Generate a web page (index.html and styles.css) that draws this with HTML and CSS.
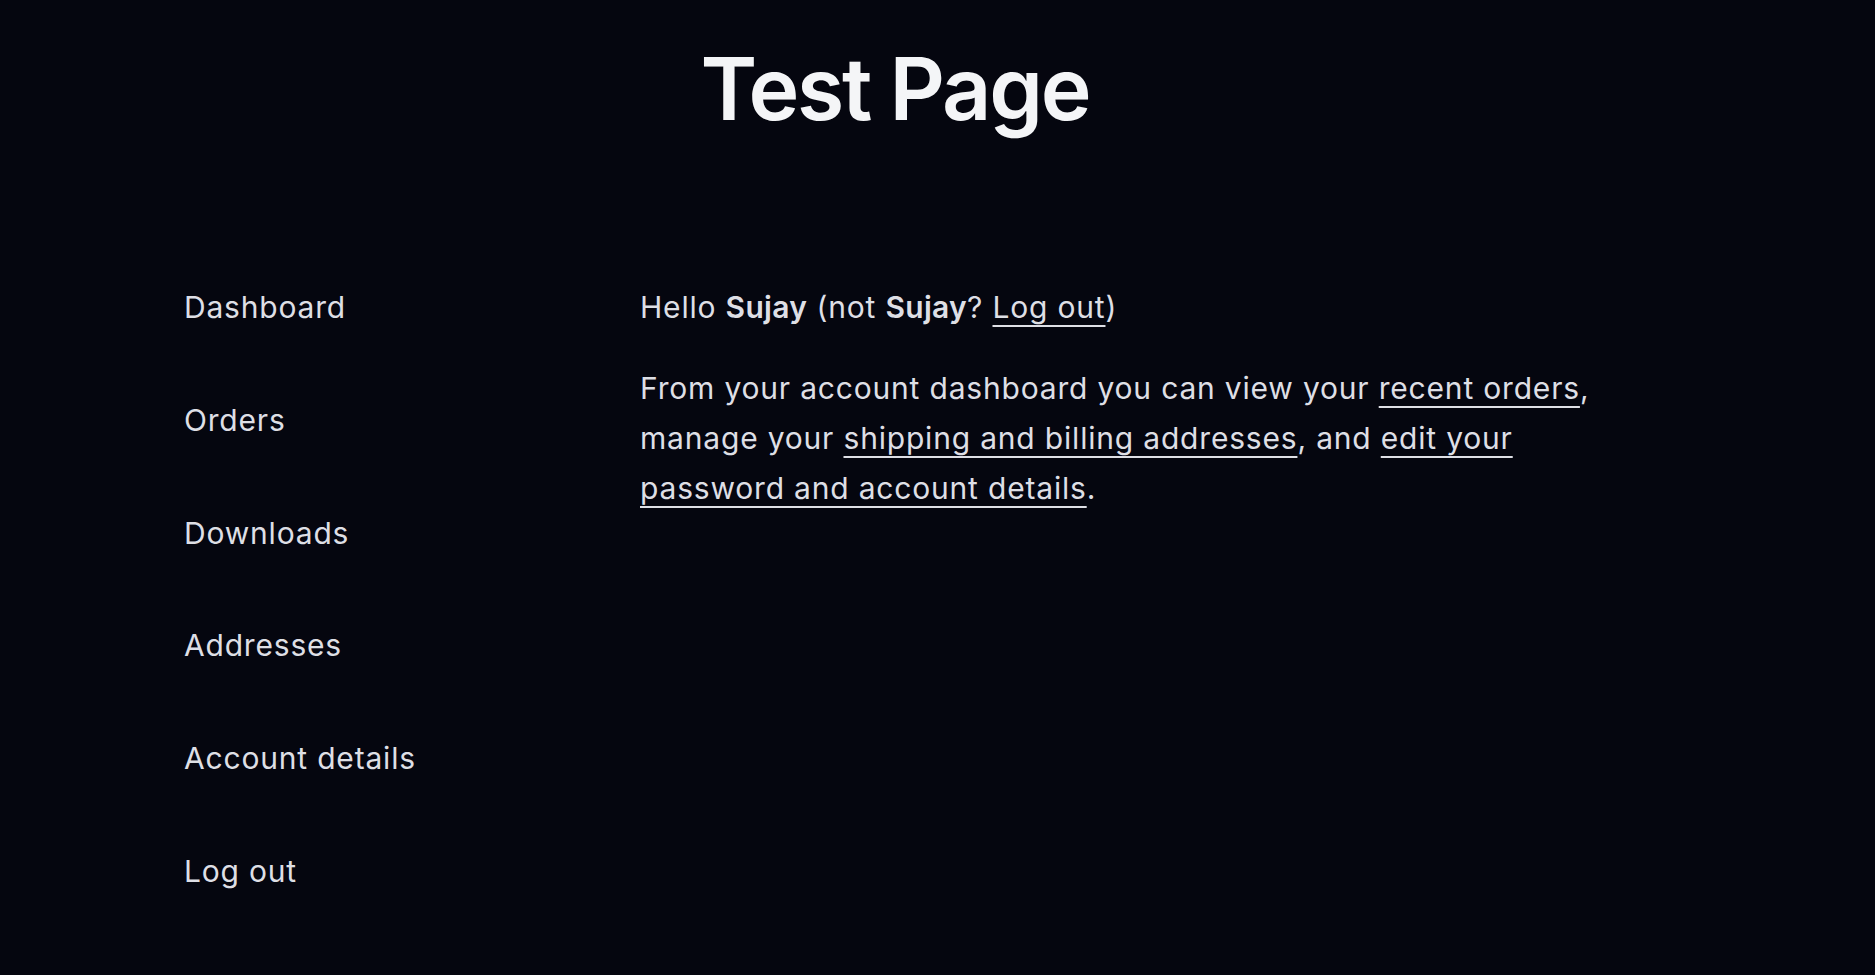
FILE: index.html
```html
<!DOCTYPE html>
<html lang="en">
<head>
<meta charset="utf-8">
<title>Test Page</title>
<link rel="stylesheet" href="styles.css">
</head>
<body>
<div class="container">
  <header class="page-header">
    <h1 class="page-title">Test Page</h1>
  </header>
  <main class="account">
    <nav class="account-nav">
      <a href="#" class="nav-link">Dashboard</a>
      <a href="#" class="nav-link">Orders</a>
      <a href="#" class="nav-link">Downloads</a>
      <a href="#" class="nav-link">Addresses</a>
      <a href="#" class="nav-link">Account details</a>
      <a href="#" class="nav-link">Log out</a>
    </nav>
    <section class="account-content">
      <p class="para">Hello <strong>Sujay</strong> (not <strong>Sujay</strong>? <a href="#" class="text-link">Log out</a>)</p>
      <p class="para">From your account dashboard you can view your <a href="#" class="text-link">recent orders</a>, manage your <a href="#" class="text-link">shipping and billing addresses</a>, and <a href="#" class="text-link">edit your password and account details</a>.</p>
    </section>
  </main>
</div>
</body>
</html>
```

FILE: styles.css
```css
html, body {
  margin: 0;
  padding: 0;
}
body {
  background: #05060f;
  color: #dedfe5;
  font-family: Inter, "Noto Sans", sans-serif;
  font-size: 30px;
  line-height: 50px;
  letter-spacing: 0.027em;
  min-height: 975px;
}
.container {
  width: 1422px;
  margin-left: 184px;
}
.page-header {
  padding-top: 38px;
  text-align: center;
}
.page-title {
  margin: 0;
  font-size: 86px;
  line-height: 1.2;
  font-weight: 600;
  letter-spacing: -0.026em;
  color: #f4f5f7;
}
.account {
  display: flex;
  padding-top: 141px;
}
.account-nav {
  display: flex;
  flex-direction: column;
  gap: 62.7px;
  width: 456px;
  flex-shrink: 0;
}
.nav-link {
  color: #dedfe5;
  text-decoration: none;
}
.account-content {
  flex: 1;
}
.para {
  margin: 0 0 31px 0;
}
.para strong {
  font-weight: 600;
  letter-spacing: 0.01em;
}
.text-link {
  color: #dedfe5;
  text-decoration: underline;
  text-decoration-thickness: 2px;
  text-underline-offset: 7px;
}
```
